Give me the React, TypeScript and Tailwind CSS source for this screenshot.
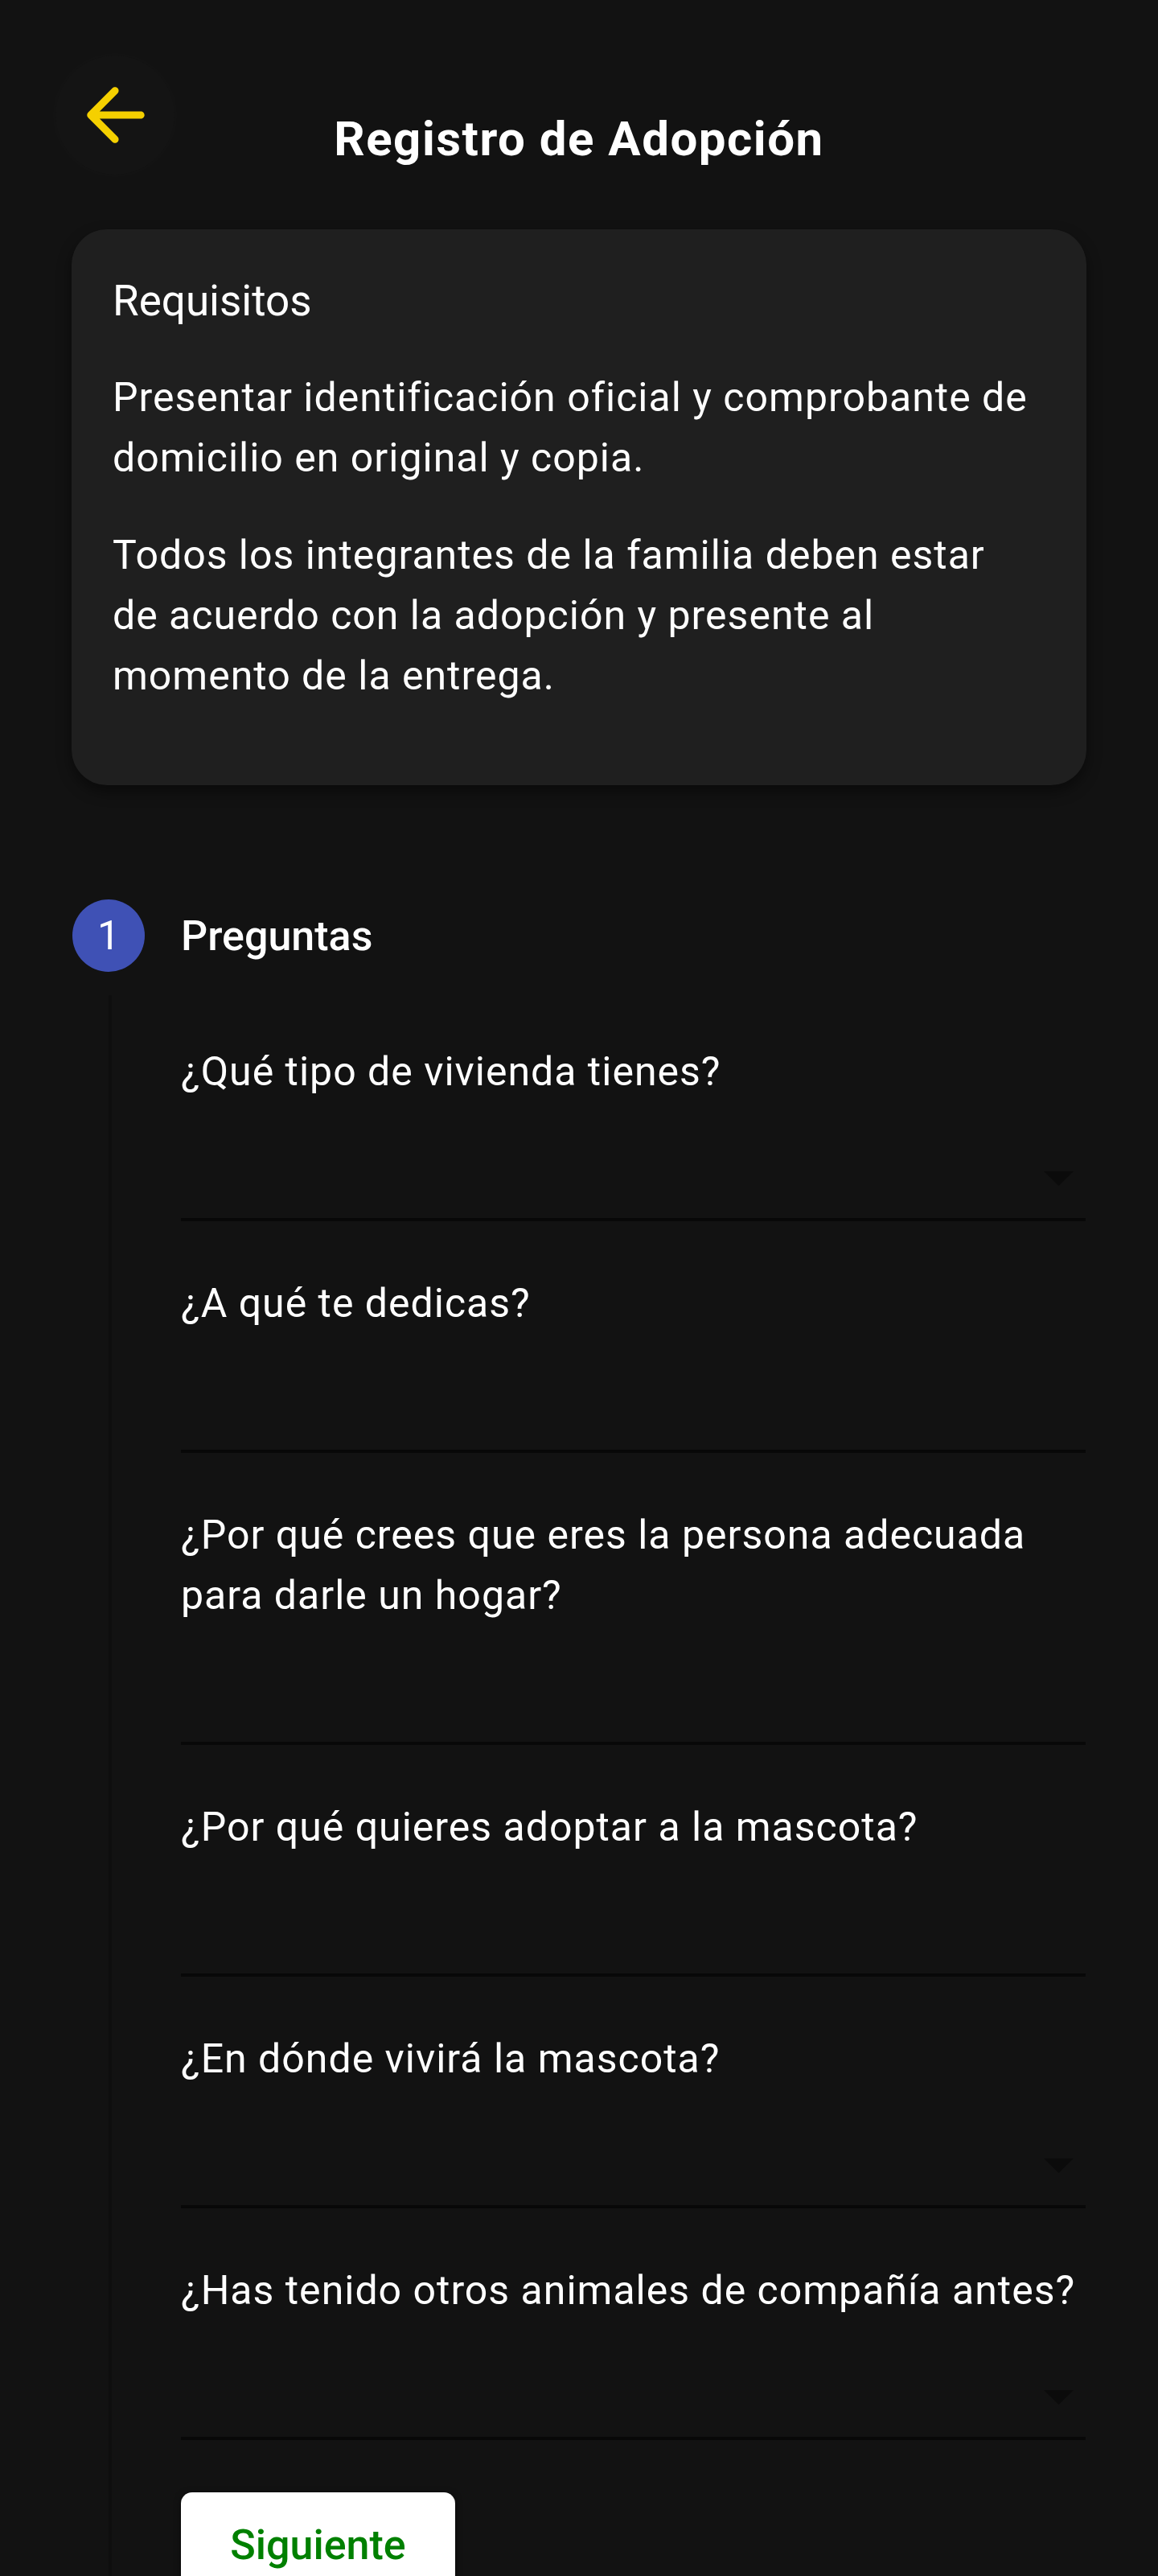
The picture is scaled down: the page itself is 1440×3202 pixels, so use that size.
import React from "react";

function BackArrow() {
  return (
    <svg width="110" height="110" viewBox="0 0 24 24" aria-hidden="true">
      <path
        fill="#f5d000"
        d="M19 11H7.83l4.88-4.88c.39-.39.39-1.03 0-1.42-.39-.39-1.02-.39-1.41 0l-6.59 6.59c-.39.39-.39 1.02 0 1.41l6.59 6.59c.39.39 1.02.39 1.41 0 .39-.39.39-1.02 0-1.41L7.83 13H19c.55 0 1-.45 1-1s-.45-1-1-1z"
      />
    </svg>
  );
}

function Caret() {
  return (
    <svg width="37" height="18" viewBox="0 0 37 18" aria-hidden="true">
      <polygon points="0,0 37,0 18.5,18" fill="#0b0b0b" />
    </svg>
  );
}

type FieldProps = {
  label: React.ReactNode;
  select?: boolean;
  first?: boolean;
};

function Field({ label, select, first }: FieldProps) {
  return (
    <div className={first ? "" : "mt-[65px]"}>
      <div className="text-[50px] leading-[75px] tracking-[1px] text-white whitespace-nowrap">{label}</div>
      <div className="h-[144px] flex items-end justify-end pb-[40px] pr-[15px]">
        {select ? <Caret /> : null}
      </div>
      <div className="h-[4px] bg-[#080808]" />
    </div>
  );
}

export default function App() {
  return (
    <div
      className="w-[1440px] h-[3202px] overflow-hidden bg-[#121212] text-white"
      style={{ fontFamily: "Roboto, 'Noto Sans', Arial, sans-serif" }}
    >
      {/* Header */}
      <header className="pt-[69px] grid grid-cols-[1fr_auto_1fr]">
        <div className="flex">
          <button className="ml-[69px] w-[148px] h-[148px] rounded-full bg-[#141414] shadow-[0_0_60px_20px_rgba(255,255,255,0.012)] flex items-center justify-center">
            <BackArrow />
          </button>
        </div>
        <h1 className="pt-[74px] text-[60px] leading-[60px] font-bold tracking-[1.5px]">
          Registro de Adopción
        </h1>
        <div />
      </header>

      {/* Requisitos card */}
      <section className="mt-[68px] mx-[89px] rounded-[44px] bg-[#1f1f1f] shadow-[0_8px_18px_rgba(0,0,0,0.45)] pt-[52px] pl-[51px] pr-[54px] pb-[98px]">
        <div className="text-[53px] leading-[75px]">Requisitos</div>
        <p className="mt-[45px] text-[50px] leading-[75px] tracking-[1px] whitespace-nowrap">
          Presentar identificación oficial y comprobante de
          <br />
          domicilio en original y copia.
        </p>
        <p className="mt-[46px] text-[50px] leading-[75px] tracking-[1px] whitespace-nowrap">
          Todos los integrantes de la familia deben estar
          <br />
          de acuerdo con la adopción y presente al
          <br />
          momento de la entrega.
        </p>
      </section>

      {/* Stepper */}
      <section className="mt-[142px] pl-[90px] pr-[90px]">
        <div className="flex items-center">
          <div className="w-[90px] h-[90px] rounded-full bg-[#3f51b5] flex items-center justify-center text-[50px] leading-none text-white">
            1
          </div>
          <div className="ml-[45px] text-[52px] leading-[75px] font-medium">Preguntas</div>
        </div>

        <div className="flex">
          <div className="w-[135px] shrink-0 flex flex-col pt-[29px] pl-[45px]">
            <div className="w-[4px] flex-1 bg-[#0e0e0e]" />
          </div>
          <div className="flex-1 pt-[87px]">
            <Field first select label="¿Qué tipo de vivienda tienes?" />
            <Field label="¿A qué te dedicas?" />
            <Field
              label={
                <>
                  ¿Por qué crees que eres la persona adecuada
                  <br />
                  para darle un hogar?
                </>
              }
            />
            <Field label="¿Por qué quieres adoptar a la mascota?" />
            <Field select label="¿En dónde vivirá la mascota?" />
            <Field select label="¿Has tenido otros animales de compañía antes?" />

            <button className="mt-[65px] w-[341px] h-[132px] rounded-[14px] bg-white shadow-[0_2px_8px_rgba(0,0,0,0.5)] flex items-center justify-center text-[52px] font-medium text-[#008000]">
              Siguiente
            </button>
            <div className="h-[200px]" />
          </div>
        </div>
      </section>
    </div>
  );
}
